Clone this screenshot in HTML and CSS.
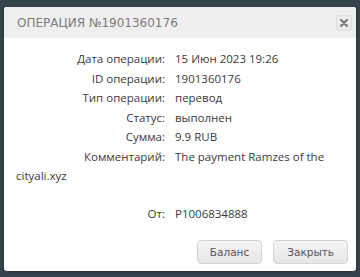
FILE: index.html
```html
<!DOCTYPE html>
<html lang="ru">
<head>
<meta charset="utf-8">
<link rel="stylesheet" href="styles.css">
</head>
<body>
<div class="dialog">
  <div class="dlg-head">
    <span class="dlg-title">Операция №1901360176</span>
    <button class="dlg-close" aria-label="close">
      <svg width="8" height="8" viewBox="0 0 8 8"><path d="M1 1L7 7M7 1L1 7" stroke="#7a7a7a" stroke-width="2.2" stroke-linecap="round"/></svg>
    </button>
  </div>
  <div class="dlg-body">
    <div class="row"><span class="lbl">Дата операции:</span>15 Июн 2023 19:26</div>
    <div class="row"><span class="lbl">ID операции:</span>1901360176</div>
    <div class="row"><span class="lbl">Тип операции:</span>перевод</div>
    <div class="row"><span class="lbl">Статус:</span>выполнен</div>
    <div class="row"><span class="lbl">Сумма:</span>9.9 RUB</div>
    <div class="row"><span class="lbl">Комментарий:</span>The payment Ramzes of the cityali.xyz<br><br></div>
    <div class="row from"><span class="lbl">От:</span>P1006834888</div>
  </div>
  <div class="dlg-foot">
    <button class="btn">Баланс</button>
    <button class="btn">Закрыть</button>
  </div>
</div>
</body>
</html>
```
FILE: styles.css
```css
html, body {
  margin: 0;
  padding: 0;
  background: #36434b;
  height: 277px;
  overflow: hidden;
}
body {
  padding: 7px 4px 6px 4px;
  box-sizing: border-box;
}
.dialog {
  width: 352px;
  height: 264px;
  background: #fff;
  border-radius: 3px;
  display: flex;
  flex-direction: column;
  box-shadow: 0 1px 3px rgba(0,0,0,0.3);
}
.dlg-head {
  height: 31px;
  flex: none;
  background: #efefef;
  border-radius: 3px 3px 0 0;
  display: flex;
  align-items: center;
  justify-content: space-between;
  padding: 0 4px 0 13px;
}
.dlg-title {
  font-family: "DejaVu Sans", sans-serif;
  font-size: 12px;
  text-transform: uppercase;
  color: #7b7b7b;
  letter-spacing: 0;
  font-weight: normal;
}
.dlg-close {
  width: 16px;
  height: 16px;
  padding: 0;
  border: 1px solid #dedede;
  border-radius: 3px;
  background: #ececec;
  display: flex;
  align-items: center;
  justify-content: center;
}
.dlg-body {
  padding: 11px 12px 0 12px;
  font-family: "Open Sans", sans-serif;
  font-size: 11.5px;
  color: #3a3a3a;
  flex: 1;
  min-height: 0;
}
.row {
  line-height: 19.5px;
}
.lbl {
  display: inline-block;
  width: 149px;
  text-align: right;
  margin-right: 10px;
}
.from {
  margin-top: -1px;
}
.dlg-foot {
  flex: none;
  display: flex;
  justify-content: flex-end;
  gap: 11px;
  padding: 0 8px 7px 0;
}
.btn {
  font-family: "DejaVu Sans", sans-serif;
  font-size: 10.5px;
  color: #555;
  height: 24px;
  padding: 0 12px;
  border: 1px solid #d4d4d4;
  border-radius: 4px;
  background: linear-gradient(#f5f5f5, #e6e6e6);
}
.btn:last-child {
  padding: 0 13px;
}
```
